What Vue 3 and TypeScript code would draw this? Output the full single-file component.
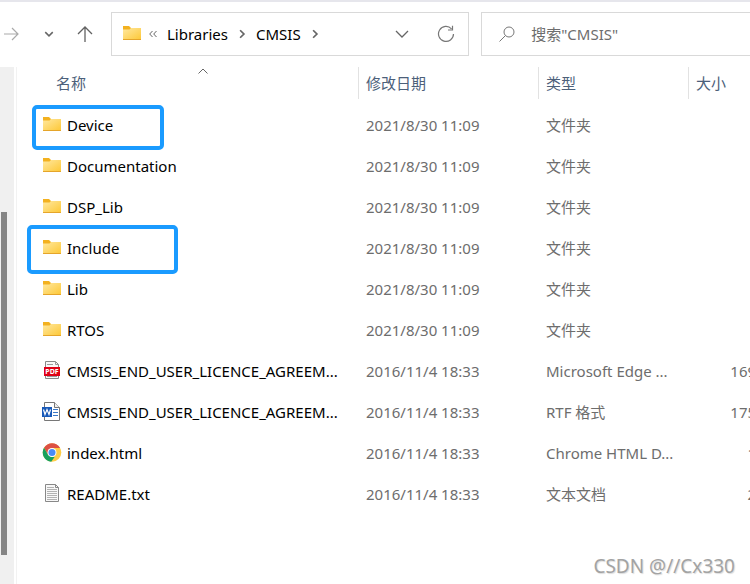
<script setup lang="ts">
import { ref } from 'vue'

type Kind = 'folder' | 'pdf' | 'word' | 'chrome' | 'text'

interface Entry {
  name: string
  kind: Kind
  date: string
  type: string
  size: string
  mark?: 'short' | 'tall'
}

const query = ref('')
const scroll = { top: 28, length: 66.4 }

const folderDate = '2021/8/30 11:09'
const fileDate = '2016/11/4 18:33'

const entries: Entry[] = [
  { name: 'Device', kind: 'folder', date: folderDate, type: '文件夹', size: '', mark: 'short' },
  { name: 'Documentation', kind: 'folder', date: folderDate, type: '文件夹', size: '' },
  { name: 'DSP_Lib', kind: 'folder', date: folderDate, type: '文件夹', size: '' },
  { name: 'Include', kind: 'folder', date: folderDate, type: '文件夹', size: '', mark: 'tall' },
  { name: 'Lib', kind: 'folder', date: folderDate, type: '文件夹', size: '' },
  { name: 'RTOS', kind: 'folder', date: folderDate, type: '文件夹', size: '' },
  { name: 'CMSIS_END_USER_LICENCE_AGREEM...', kind: 'pdf', date: fileDate, type: 'Microsoft Edge ...', size: '169 KB' },
  { name: 'CMSIS_END_USER_LICENCE_AGREEM...', kind: 'word', date: fileDate, type: 'RTF 格式', size: '175 KB' },
  { name: 'index.html', kind: 'chrome', date: fileDate, type: 'Chrome HTML D...', size: '1 KB' },
  { name: 'README.txt', kind: 'text', date: fileDate, type: '文本文档', size: '2 KB' },
]
</script>

<template>
  <div class="explorer">
    <svg class="defs" width="0" height="0" aria-hidden="true">
      <defs>
        <linearGradient id="folder-face" x1="0" y1="0" x2="1" y2="1">
          <stop offset="0" stop-color="#ffe8a0" />
          <stop offset="1" stop-color="#fdc837" />
        </linearGradient>
        <symbol id="icon-folder" viewBox="0 0 20 20">
          <path d="M1 2h6l2 2h10v4H1z" fill="#f3b11f" />
          <path d="M1 5.500h6.500L9 4h10v11.500H1z" fill="url(#folder-face)" />
          <path d="M1 15h18v1H1z" fill="#e5a52a" />
        </symbol>
      </defs>
    </svg>

    <header class="toolbar">
      <nav class="history" aria-label="导航">
        <button type="button" aria-label="前进">
          <svg class="arrow" viewBox="0 0 16 16"><path d="M0 8h14M8 2l6 6-6 6" stroke="#aaa" stroke-width="1.200" /></svg>
        </button>
        <button type="button" aria-label="最近位置">
          <svg class="small" viewBox="0 0 8 8"><path d="M1 2.500L4 5.500l3-3" stroke="#666" stroke-width="1.200" /></svg>
        </button>
        <button type="button" aria-label="向上">
          <svg class="arrow" viewBox="0 0 16 16"><path d="M8 16V1M1 8l7-7 7 7" stroke="#626262" stroke-width="1.300" /></svg>
        </button>
      </nav>

      <div class="address">
        <svg class="file-icon"><use href="#icon-folder" /></svg>
        <svg class="small" viewBox="0 0 10 10"><path d="M4.500 2L1.700 5l2.800 3M8.500 2L5.700 5l2.800 3" stroke="#666" /></svg>
        <a href="#libraries">Libraries</a>
        <svg class="small" viewBox="0 0 8 8"><path d="M2.500 1l3 3-3 3" stroke="#666" stroke-width="1.400" /></svg>
        <a href="#cmsis">CMSIS</a>
        <svg class="small" viewBox="0 0 8 8"><path d="M2.500 1l3 3-3 3" stroke="#666" stroke-width="1.400" /></svg>
        <button type="button" class="history-open" aria-label="以前的位置">
          <svg class="chevron" viewBox="0 0 14 14"><path d="M1 4l6 6 6-6" stroke="#666" stroke-width="1.300" /></svg>
        </button>
        <button type="button" aria-label="刷新">
          <svg class="refresh" viewBox="0 0 18 18"><path d="M14.500 3.800A7.500 7.500 0 1 0 16.500 9M15.500.8V5H11" stroke="#777" stroke-width="1.200" /></svg>
        </button>
      </div>

      <label class="search">
        <svg class="arrow" viewBox="0 0 16 16"><circle cx="10" cy="6" r="5" stroke="#777" /><path d="M6.500 9.500L.5 15.500" stroke="#777" /></svg>
        <input v-model="query" type="text" placeholder="搜索&quot;CMSIS&quot;" aria-label="搜索 CMSIS" />
      </label>
    </header>

    <main class="body">
      <div class="tree-scroll">
        <div class="thumb" :style="{ top: scroll.top + '%', height: scroll.length + '%' }"></div>
      </div>
      <div class="pane">
        <table>
          <colgroup>
            <col class="col-name" /><col class="col-date" /><col class="col-type" /><col class="col-size" />
          </colgroup>
          <thead>
            <tr>
              <th aria-sort="ascending">
                <div class="heading first">名称
                  <svg class="sort" viewBox="0 0 10 6"><path d="M.5 5.500L5 1l4.500 4.500" stroke="#666" /></svg>
                </div>
              </th>
              <th><div class="heading">修改日期</div></th>
              <th><div class="heading">类型</div></th>
              <th><div class="heading">大小</div></th>
            </tr>
          </thead>
          <tbody>
            <tr v-for="(entry, i) in entries" :key="i">
              <td class="name">
                <div class="file">
                  <svg v-if="entry.kind === 'folder'" class="file-icon"><use href="#icon-folder" /></svg>
                  <svg v-else-if="entry.kind === 'pdf'" class="file-icon" viewBox="0 0 20 20">
                    <path d="M3.500.5h10l3 3v14h-13z" fill="#f8f8f8" stroke="#888" />
                    <path d="M13.500.5v3h3M5 3.500h6M5 15.500h10" fill="none" stroke="#999" />
                    <rect x="2" y="6" width="16" height="9" fill="#df0016" />
                    <text x="10" y="13" class="pdf-label">PDF</text>
                  </svg>
                  <svg v-else-if="entry.kind === 'word'" class="file-icon" viewBox="0 0 20 20">
                    <path d="M2.500.5h10l5 5v13h-15z" fill="#fff" stroke="#777" />
                    <path d="M12.500.5v5h5" fill="#eee" stroke="#777" />
                    <path d="M11 7.500h5M11 10.500h5M11 13.500h5" stroke="#3b78c5" />
                    <rect x="0" y="5" width="10" height="10" fill="#1859b8" />
                    <path d="M1.500 7.500L3 12.500l2-5 2 5 1.500-5" fill="none" stroke="#fff" stroke-width="1.200" />
                  </svg>
                  <svg v-else-if="entry.kind === 'chrome'" class="file-icon" viewBox="0 0 20 20">
                    <circle cx="10" cy="9.500" r="9.300" fill="#ffcd46" />
                    <path d="M10 9.500L6.250 11.700 2 4.800A9.300 9.300 0 0 1 18.100 5H10z" fill="#dd5144" />
                    <path d="M2 4.800l4.200 7.200L10 14h2.600L9.200 18.800A9.300 9.300 0 0 1 2 4.800z" fill="#17a05d" />
                    <circle cx="10" cy="9.500" r="4.500" fill="#fff" />
                    <circle cx="10" cy="9.500" r="3.500" fill="#4c8bf5" />
                  </svg>
                  <svg v-else class="file-icon" viewBox="0 0 20 20">
                    <path d="M3.500.5h10l3 3v14h-13z" fill="#f8f8f8" stroke="#888" />
                    <path d="M13.500.5v3h3" fill="none" stroke="#888" />
                    <path d="M5 3.500h7M5 5.500h10M5 7.500h10M5 9.500h10M5 11.500h10M5 13.500h10M5 15.500h10" stroke="#b2b2b2" />
                  </svg>
                  <span>{{ entry.name }}</span>
                </div>
                <span v-if="entry.mark" class="mark" :class="entry.mark"></span>
              </td>
              <td>{{ entry.date }}</td>
              <td>{{ entry.type }}</td>
              <td class="size">{{ entry.size }}</td>
            </tr>
          </tbody>
        </table>
      </div>
    </main>
    <div class="watermark">CSDN @//Cx330</div>
  </div>
</template>

<style>
body {
  margin: 0;
  background: #fff;
}
</style>

<style scoped>
.explorer {
  position: relative;
  display: flex;
  flex-direction: column;
  box-sizing: border-box;
  min-height: 100vh;
  overflow: hidden;
  border-top: 2px solid #e6e6ec;
  font-family: "Noto Sans", "Noto Sans CJK SC", sans-serif;
  font-size: 15px;
  line-height: 20px;
  color: #000;
}
.defs {
  position: absolute;
}
svg {
  flex: none;
  fill: none;
}
button {
  display: flex;
  padding: 0;
  border: 0;
  background: none;
}
.toolbar {
  display: flex;
  padding-top: 10px;
}
.history {
  display: flex;
  flex: none;
  align-items: center;
  justify-content: space-between;
  box-sizing: border-box;
  width: 111px;
  padding: 0 18px 0 4px;
}
.arrow {
  width: 16px;
  height: 16px;
}
.small {
  width: 10px;
  height: 10px;
}
.chevron {
  width: 14px;
  height: 14px;
}
.refresh {
  width: 18px;
  height: 18px;
}
.address,
.search {
  display: flex;
  align-items: center;
  box-sizing: border-box;
  height: 44px;
  border: 1px solid #d9d9d9;
}
.address {
  flex: 358 1 0;
  gap: 8px;
  padding: 0 13px 0 10px;
}
.address a {
  padding: 0 1px;
  color: inherit;
  text-decoration: none;
}
.address .file-icon {
  margin-right: -2px;
}
.history-open {
  margin: 0 20px 0 auto;
}
.search {
  flex: 277 1 0;
  gap: 16px;
  margin: 0 -8px 0 12px;
  padding-left: 17px;
}
.search input {
  flex: 1;
  min-width: 0;
  padding: 0;
  border: 0;
  outline: 0;
  background: none;
  font: inherit;
}
.search input::placeholder {
  color: #6d6d6d;
  opacity: 1;
}
.body {
  display: flex;
  flex: 1;
  padding-top: 11px;
}
.tree-scroll {
  position: relative;
  flex: none;
  width: 14px;
  background: #f0f0f0;
}
.thumb {
  position: absolute;
  left: 1px;
  width: 6px;
  background: #858585;
}
.pane {
  flex: 1;
  min-width: 0;
  margin-left: 2px;
  border-left: 1px solid #f2f2f2;
}
table {
  table-layout: fixed;
  width: 780px;
  border-collapse: collapse;
}
.col-name {
  width: 342px;
}
.col-date {
  width: 180px;
}
.col-type {
  width: 150px;
}
th {
  height: 37px;
  padding: 0;
  vertical-align: top;
  font-weight: 400;
  text-align: left;
  color: #4c607a;
}
.heading {
  position: relative;
  box-sizing: border-box;
  height: 32px;
  padding: 6px 0 6px 7px;
  border-right: 1px solid #e2e2e2;
}
.heading.first {
  padding-left: 39px;
}
.sort {
  position: absolute;
  top: 1px;
  left: 181px;
  width: 10px;
  height: 6px;
}
td {
  height: 41px;
  padding: 0 0 0 7px;
  color: #6d6d6d;
  white-space: nowrap;
}
.name {
  position: relative;
  padding-left: 25px;
  color: #000;
}
.file {
  display: flex;
  align-items: center;
  gap: 5px;
}
.file-icon {
  width: 20px;
  height: 20px;
}
.pdf-label {
  fill: #fff;
  font-size: 7px;
  font-weight: 700;
  text-anchor: middle;
}
.size {
  padding-right: 18px;
  text-align: right;
}
.mark {
  position: absolute;
  box-sizing: border-box;
  border: 4px solid #1a9bff;
  border-radius: 5px;
}
.mark.short {
  top: 1px;
  left: 15px;
  width: 132px;
  height: 45px;
}
.mark.tall {
  top: -2px;
  left: 10px;
  width: 151px;
  height: 49px;
}
.watermark {
  position: absolute;
  right: 15px;
  bottom: 5px;
  font-size: 19px;
  line-height: 26px;
  color: #a3a3a3;
  text-shadow: 1px 1px 1px #ddd;
}
</style>
